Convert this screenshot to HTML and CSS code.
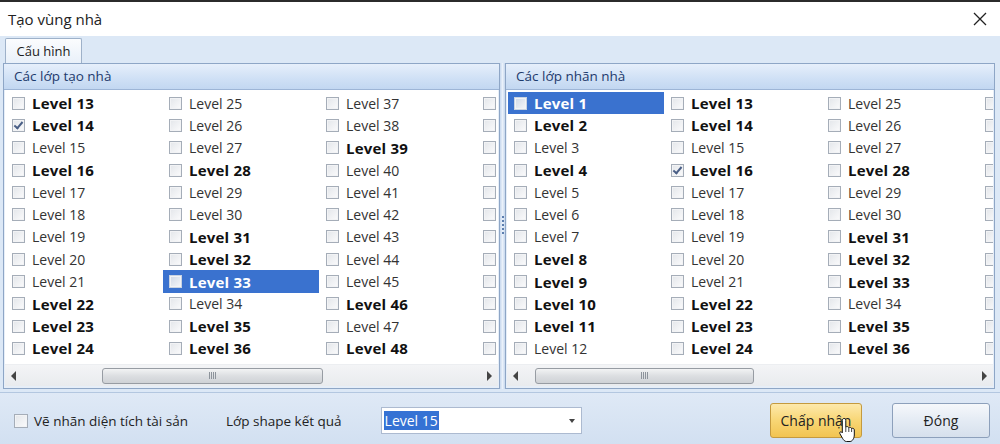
FILE: index.html
```html
<!DOCTYPE html>
<html lang="vi">
<head>
    <meta charset="UTF-8">
    <title>Tạo vùng nhà</title>
    <link rel="stylesheet" href="styles.css">
</head>
<body>

<div class="window">
    <div class="titlebar">
        <span>Tạo vùng nhà</span>
        <svg class="close" width="14" height="14" viewBox="0 0 14 14"><path d="M1 1 L13 13 M13 1 L1 13" stroke="#222" stroke-width="1.3"/></svg>
    </div>

    <div class="main">
        <div class="tabs"><div class="tab">Cấu hình</div></div>

        <div class="panels">
            <section class="panel left-panel">
                <div class="panel-head">Các lớp tạo nhà</div>
                <div class="list" id="listTao"></div>
                <div class="hscroll">
                    <span class="arrow left"></span>
                    <div class="track"><div class="thumb" style="margin-left: 82px; width: 221px;"><i></i></div></div>
                    <span class="arrow right"></span>
                </div>
            </section>

            <div class="splitter"><span></span></div>

            <section class="panel">
                <div class="panel-head">Các lớp nhãn nhà</div>
                <div class="list" id="listNhan"></div>
                <div class="hscroll">
                    <span class="arrow left"></span>
                    <div class="track"><div class="thumb" style="margin-left: 13px; width: 219px;"><i></i></div></div>
                    <span class="arrow right"></span>
                </div>
            </section>
        </div>

        <!-- Thanh dưới -->
        <div class="footer">
            <label class="opt"><span class="box"></span>Vẽ nhãn diện tích tài sản</label>
            <span class="lbl">Lớp shape kết quả</span>
            <div class="combo"><span class="sel">Level 15</span><span class="drop"></span></div>
            <button class="btn ok">Chấp nhận</button>
            <button class="btn">Đóng</button>
            <svg class="cursor" width="20" height="26" viewBox="0 0 20 26">
                <path d="M6 1.5 C7.2 1.5 7.8 2.3 7.8 3.5 V10 C8.5 9.3 10.4 9.4 10.8 10.6 C11.6 10 13.3 10.3 13.6 11.5 C14.4 11 16.2 11.3 16.3 12.8 V18 C16.3 21 14.5 24.5 12 24.5 H8.5 C6.6 24.5 5.6 23 4.5 21.3 L1.8 16.5 C1.2 15.4 2.6 14.3 3.6 15 L4.3 15.8 V3.5 C4.3 2.3 4.9 1.5 6 1.5 Z" fill="#fff" stroke="#111" stroke-width="1"/>
                <path d="M7.8 10 V15 M10.8 10.6 V15 M13.6 11.5 V15" stroke="#111" stroke-width="0.8"/>
            </svg>
        </div>
    </div>
</div>

<script>
    // Mỗi cột: số bắt đầu và chuỗi cờ in đậm (1 = đậm)
    const taoNha = [
        { start: 13, bold: '110100000111' },
        { start: 25, bold: '000100111011' },
        { start: 37, bold: '001000000101' },
        { start: 49, bold: '000000000000' }
    ];
    const nhanNha = [
        { start: 1,  bold: '110100011110' },
        { start: 13, bold: '110100000111' },
        { start: 25, bold: '000100111011' },
        { start: 37, bold: '001000000101' }
    ];

    function taoDanhSach(id, cot, chon, check) {
        const list = document.getElementById(id);
        cot.forEach(c => {
            for (let i = 0; i < 12; i++) {
                const n = c.start + i;
                const item = document.createElement('div');
                item.className = 'item';
                if (c.bold[i] === '1') item.classList.add('bold');
                if (n === chon) item.classList.add('selected');
                const box = document.createElement('span');
                box.className = 'box';
                if (n === check) box.classList.add('checked');
                item.appendChild(box);
                item.appendChild(document.createTextNode('Level ' + n));
                list.appendChild(item);
            }
        });
    }

    taoDanhSach('listTao', taoNha, 33, 14);
    taoDanhSach('listNhan', nhanNha, 1, 16);
</script>

</body>
</html>
```

FILE: styles.css
```css
body {
    margin: 0;
    font-family: 'Open Sans', 'Noto Sans', sans-serif;
    color: #1b1b1b;
    background-color: #dce8f6;
}
.window {
    width: 1000px;
    height: 444px;
    border-top: 2px solid #2b2b2b;
    box-sizing: border-box;
    display: flex;
    flex-direction: column;
    overflow: hidden;
    position: relative;
}
.titlebar {
    height: 34px;
    background-color: #fff;
    display: flex;
    align-items: center;
    justify-content: space-between;
    padding: 0 13px 0 8px;
    font-size: 15px;
    color: #222;
}
.main {
    flex: 1;
    background-color: #dce8f6;
    display: flex;
    flex-direction: column;
}
.tabs {
    height: 27px;
    padding-left: 5px;
    display: flex;
    align-items: flex-end;
}
.tab {
    width: 77px;
    height: 25px;
    box-sizing: border-box;
    border: 1px solid #9eb1c9;
    border-bottom: none;
    background: linear-gradient(#fbfcfe, #e9f0f9);
    font-size: 13px;
    text-align: center;
    line-height: 24px;
    border-radius: 2px 2px 0 0;
}
.panels {
    display: flex;
    padding: 0 5px 0 3px;
    height: 326px;
}
.panel {
    flex: 1;
    border: 1px solid #8ea6c6;
    background-color: #e6eef8;
    display: flex;
    flex-direction: column;
    overflow: hidden;
}
.left-panel {
    flex: none;
    width: 497px;
    box-sizing: border-box;
}
.panel-head {
    height: 25px;
    background: linear-gradient(#e6effb, #cfe0f5 60%, #c2d7f1);
    border-bottom: 1px solid #9db5d6;
    color: #1d3a6c;
    font-size: 13.5px;
    line-height: 25px;
    padding-left: 10px;
}
.list {
    background-color: #fff;
    margin: 0 1px;
    padding-top: 2px;
    height: 272px;
    display: grid;
    grid-auto-flow: column;
    grid-template-rows: repeat(12, 22.3px);
    grid-auto-columns: 157px;
    overflow: hidden;
}
.item {
    display: flex;
    align-items: center;
    gap: 7px;
    padding-left: 7px;
    font-size: 14px;
    color: #333;
    white-space: nowrap;
}
.item.bold {
    font-weight: bold;
    font-size: 15px;
    letter-spacing: 0.2px;
    color: #111;
}
.item.selected {
    background-color: #3a72cf;
    color: #fff;
    margin-left: 1px;
    padding-left: 6px;
}
.box {
    width: 11px;
    height: 11px;
    flex: none;
    border: 1px solid #a5adb8;
    background: linear-gradient(135deg, #e3e6ea, #fbfbfc);
    box-shadow: inset 0 0 0 1px #f2f3f5;
    position: relative;
}
.item.selected .box {
    border-color: #c8d3e2;
    background: linear-gradient(135deg, #cfd8e6, #f4f6f9);
}
.box.checked::after {
    content: '';
    position: absolute;
    left: 3px;
    top: 0;
    width: 3px;
    height: 7px;
    border: solid #4a5f86;
    border-width: 0 2px 2px 0;
    transform: rotate(40deg);
}
.hscroll {
    flex: 1;
    display: flex;
    align-items: center;
    margin: 0 1px 2px;
    padding: 0 6px;
    background: linear-gradient(#f3f4f6, #e9ebee);
    border-top: 1px solid #eceef1;
}
.arrow {
    width: 0;
    height: 0;
    border-top: 5px solid transparent;
    border-bottom: 5px solid transparent;
}
.arrow.left {
    border-right: 5px solid #444;
}
.arrow.right {
    border-left: 5px solid #444;
}
.track {
    flex: 1;
    margin: 0 4px;
}
.thumb {
    height: 16px;
    box-sizing: border-box;
    border: 1px solid #979ca3;
    border-radius: 3px;
    background: linear-gradient(#f2f3f4, #dcdee1 50%, #cfd2d6);
    display: flex;
    justify-content: center;
    align-items: center;
}
.thumb i {
    width: 7px;
    height: 7px;
    background: repeating-linear-gradient(90deg, #8d939b 0 1px, transparent 1px 2px);
}
.splitter {
    width: 5px;
    display: flex;
    justify-content: center;
    align-items: center;
    background: linear-gradient(90deg, #c7d8ee, #eaf1fa, #c7d8ee);
}
.splitter span {
    width: 2px;
    height: 20px;
    background: repeating-linear-gradient(#5d7faf 0 2px, transparent 2px 4px);
}
.footer {
    flex: 1;
    margin-top: 3px;
    border-top: 1px solid #b3c7e0;
    background: linear-gradient(#dfe9f6, #d2e0f1);
    display: flex;
    align-items: center;
    padding: 4px 10px 0 14px;
    font-size: 13.5px;
    color: #222;
    position: relative;
}
.opt {
    display: flex;
    align-items: center;
    gap: 6px;
}
.opt .box {
    width: 12px;
    height: 12px;
}
.lbl {
    margin-left: 38px;
}
.combo {
    margin-left: 39px;
    width: 201px;
    height: 27px;
    box-sizing: border-box;
    border: 1px solid #acbad0;
    background-color: #fff;
    display: flex;
    align-items: center;
    justify-content: space-between;
    padding: 0 6px 0 2px;
}
.combo .sel {
    background-color: #3572d4;
    color: #fff;
    padding: 0 1px;
    line-height: 19px;
    font-size: 14px;
}
.drop {
    border-left: 3px solid transparent;
    border-right: 3px solid transparent;
    border-top: 4px solid #444;
}
.btn {
    height: 35px;
    font-family: inherit;
    font-size: 14px;
    color: #222;
    border: 1px solid #8da0bb;
    border-radius: 3px;
    background: linear-gradient(#f6f8fb, #e4ebf4 50%, #d6e0ec);
    width: 98px;
}
.btn.ok {
    margin-left: auto;
    margin-right: 30px;
    width: 92px;
    border-color: #c49a3f;
    background: linear-gradient(#fde9ac, #f8d675 50%, #f2c451);
}
.cursor {
    position: absolute;
    left: 838px;
    top: 24px;
}
```
